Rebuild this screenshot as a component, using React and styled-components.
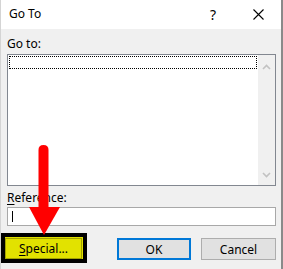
import styled, { createGlobalStyle } from 'styled-components';

const GlobalStyle = createGlobalStyle`
  html, body {
    margin: 0;
    padding: 0;
    background: #f0f0f0;
  }
  body {
    font-family: "Noto Sans", "Liberation Sans", sans-serif;
    font-size: 12px;
    color: #000;
  }
`;

const Window = styled.div`
  position: relative;
  width: 283px;
  height: 269px;
  box-sizing: border-box;
  border-left: 1px solid #d4d4d4;
  border-right: 2px solid #8a8a8a;
  display: flex;
  flex-direction: column;
  overflow: hidden;
  background: #f0f0f0;
`;

const TitleBar = styled.div`
  height: 29px;
  flex: none;
  background: #fff;
  display: flex;
  align-items: center;
  padding-left: 8px;
`;

const Title = styled.span`
  flex: 1;
  font-size: 12px;
  line-height: 16px;
  margin-top: -1px;
`;

const TitleButton = styled.span`
  width: ${(p) => p.$w}px;
  height: 29px;
  display: flex;
  align-items: center;
  justify-content: center;
  font-size: 14px;
`;

const Body = styled.div`
  flex: 1;
  padding: 7px 5px 0 6px;
  display: flex;
  flex-direction: column;
`;

const Label = styled.div`
  line-height: 16px;
  height: 16px;
  margin-bottom: ${(p) => p.$gap}px;
  & u {
    text-underline-offset: 2px;
  }
`;

const ListBox = styled.div`
  height: 132px;
  box-sizing: border-box;
  border: 1px solid #828790;
  background: #fff;
  display: flex;
  margin-bottom: 4px;
`;

const ListArea = styled.div`
  flex: 1;
  padding: 1px;
`;

const FocusRow = styled.div`
  height: 13px;
  box-sizing: border-box;
  border: 1px dotted #000;
`;

const ScrollBar = styled.div`
  width: 17px;
  background: #f0f0f0;
  display: flex;
  flex-direction: column;
  justify-content: space-between;
  align-items: center;
  padding: 9px 0 7px;
`;

const Input = styled.div`
  height: 19px;
  box-sizing: border-box;
  border: 1px solid #a8a8a8;
  background: #fff;
  display: flex;
  align-items: center;
  padding-left: 4px;
`;

const Caret = styled.span`
  width: 1px;
  height: 11px;
  background: #000;
`;

const ButtonRow = styled.div`
  display: flex;
  align-items: flex-start;
  gap: 10px;
  margin-top: 7px;
`;

const Highlight = styled.div`
  margin-left: -6px;
  width: 86px;
  height: 30px;
  box-sizing: border-box;
  border: 4px solid #000;
  background: #e2e200;
  padding: 1px 1px 0 0;
  margin-right: 20px;
`;

const Button = styled.div`
  width: ${(p) => p.$w}px;
  height: ${(p) => p.$h}px;
  box-sizing: border-box;
  border: ${(p) => p.$border};
  background: ${(p) => p.$bg};
  display: flex;
  align-items: center;
  justify-content: center;
  margin-top: ${(p) => p.$top}px;
  & u {
    text-underline-offset: 2px;
  }
`;

const Arrow = styled.svg`
  position: absolute;
  left: 24px;
  top: 140px;
  pointer-events: none;
`;

const Chevron = ({ up }) => (
  <svg width="9" height="6" viewBox="0 0 9 6">
    <path
      d={up ? 'M1 5 L4.5 1.5 L8 5' : 'M1 1 L4.5 4.5 L8 1'}
      fill="none"
      stroke="#c2c2c2"
      strokeWidth="1.6"
    />
  </svg>
);

export default function App() {
  return (
    <>
      <GlobalStyle />
      <Window>
        <TitleBar>
          <Title>Go To</Title>
          <TitleButton $w={46}>?</TitleButton>
          <TitleButton $w={45}>
            <svg width="11" height="11" viewBox="0 0 11 11">
              <path d="M0.5 0.5 L10.5 10.5 M10.5 0.5 L0.5 10.5" stroke="#000" strokeWidth="1.1" />
            </svg>
          </TitleButton>
        </TitleBar>
        <Body>
          <Label $gap={2}>Go to:</Label>
          <ListBox>
            <ListArea>
              <FocusRow />
            </ListArea>
            <ScrollBar>
              <Chevron up />
              <Chevron />
            </ScrollBar>
          </ListBox>
          <Label $gap={1}>
            <u>R</u>eference:
          </Label>
          <Input>
            <Caret />
          </Input>
          <ButtonRow>
            <Highlight>
              <Button $w={77} $h={21} $top={0} $border="1px solid #a3a300" $bg="#e2e200">
                <span>
                  <u>S</u>pecial...
                </span>
              </Button>
            </Highlight>
            <Button $w={74} $h={22} $top={5} $border="2px solid #0078d7" $bg="#e1e1e1">
              OK
            </Button>
            <Button $w={75} $h={22} $top={5} $border="1px solid #adadad" $bg="#e1e1e1">
              Cancel
            </Button>
          </ButtonRow>
        </Body>
        <Arrow width="40" height="100" viewBox="0 0 40 100">
          <path d="M13.5 10 Q13.5 5 18.5 5 Q23.5 5 23.5 10 L23.5 68 L13.5 68 Z" fill="#ff0000" />
          <path d="M4 67 L35 67 L19 95 Z" fill="#ff0000" />
        </Arrow>
      </Window>
    </>
  );
}
